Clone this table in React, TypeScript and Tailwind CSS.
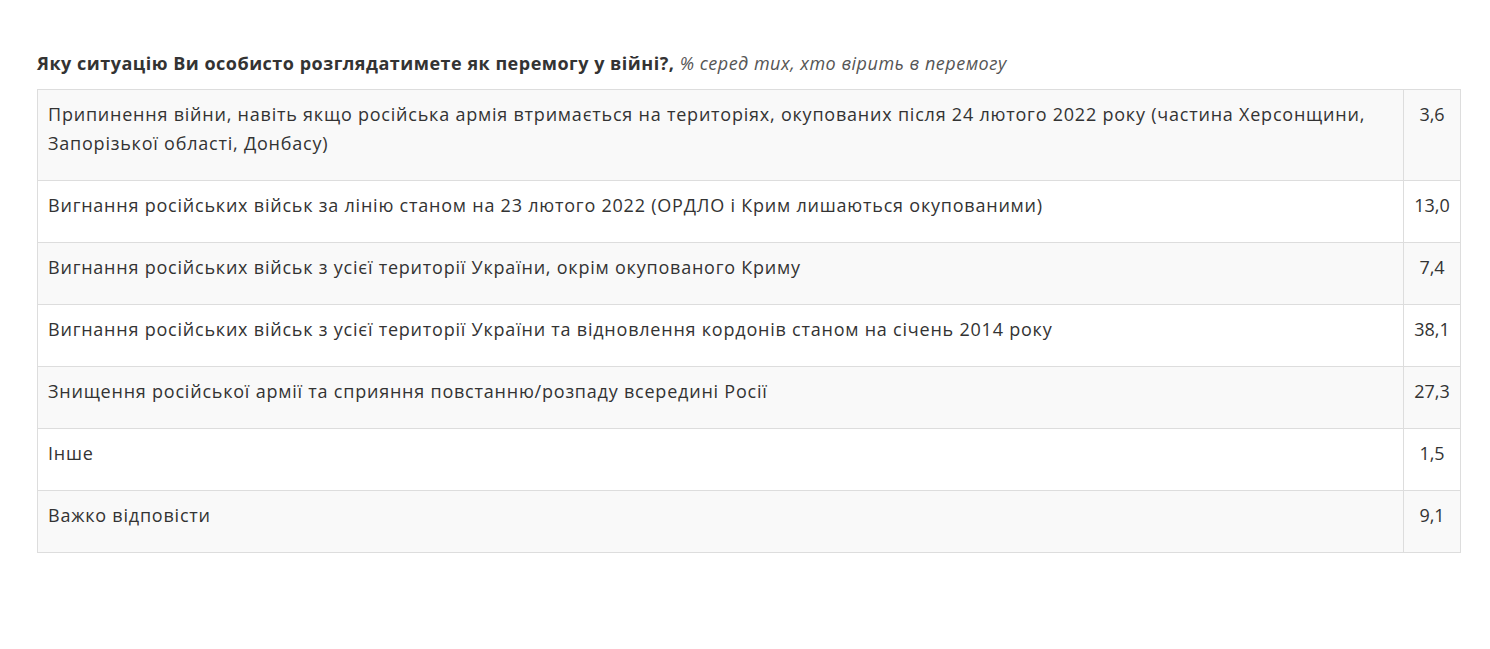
const rows = [
  {
    label:
      "Припинення війни, навіть якщо російська армія втримається на територіях, окупованих після 24 лютого 2022 року (частина Херсонщини, Запорізької області, Донбасу)",
    value: "3,6",
  },
  { label: "Вигнання російських військ за лінію станом на 23 лютого 2022 (ОРДЛО і Крим лишаються окупованими)", value: "13,0" },
  { label: "Вигнання російських військ з усієї території України, окрім окупованого Криму", value: "7,4" },
  {
    label: "Вигнання російських військ з усієї території України та відновлення кордонів станом на січень 2014 року",
    value: "38,1",
  },
  { label: "Знищення російської армії та сприяння повстанню/розпаду всередині Росії", value: "27,3" },
  { label: "Інше", value: "1,5" },
  { label: "Важко відповісти", value: "9,1" },
];

export default function App() {
  return (
    <div className="min-h-[649px] bg-white px-[37px] pt-[51px] text-[#333] font-['Open_Sans',sans-serif]">
      <p className="mb-[14px] text-[18px] leading-[24px] tracking-[0.5px]">
        <strong className="font-bold">Яку ситуацію Ви особисто розглядатимете як перемогу у війні?,</strong>{" "}
        <em className="text-[#555]">% серед тих, хто вірить в перемогу</em>
      </p>

      {/* Results table */}
      <table className="w-[1424px] border-collapse border border-[#ddd] text-[18px] leading-[29px] tracking-[0.78px]">
        <tbody>
          {rows.map((row, i) => (
            <tr key={row.label} className={i % 2 === 0 ? "bg-[#f9f9f9]" : "bg-white"}>
              <td className="border border-[#ddd] px-[10px] pt-[10px] pb-[22px] align-top">{row.label}</td>
              <td className="w-[57px] border border-[#ddd] px-[4px] pt-[10px] pb-[22px] text-center align-top tracking-normal">
                {row.value}
              </td>
            </tr>
          ))}
        </tbody>
      </table>
    </div>
  );
}
